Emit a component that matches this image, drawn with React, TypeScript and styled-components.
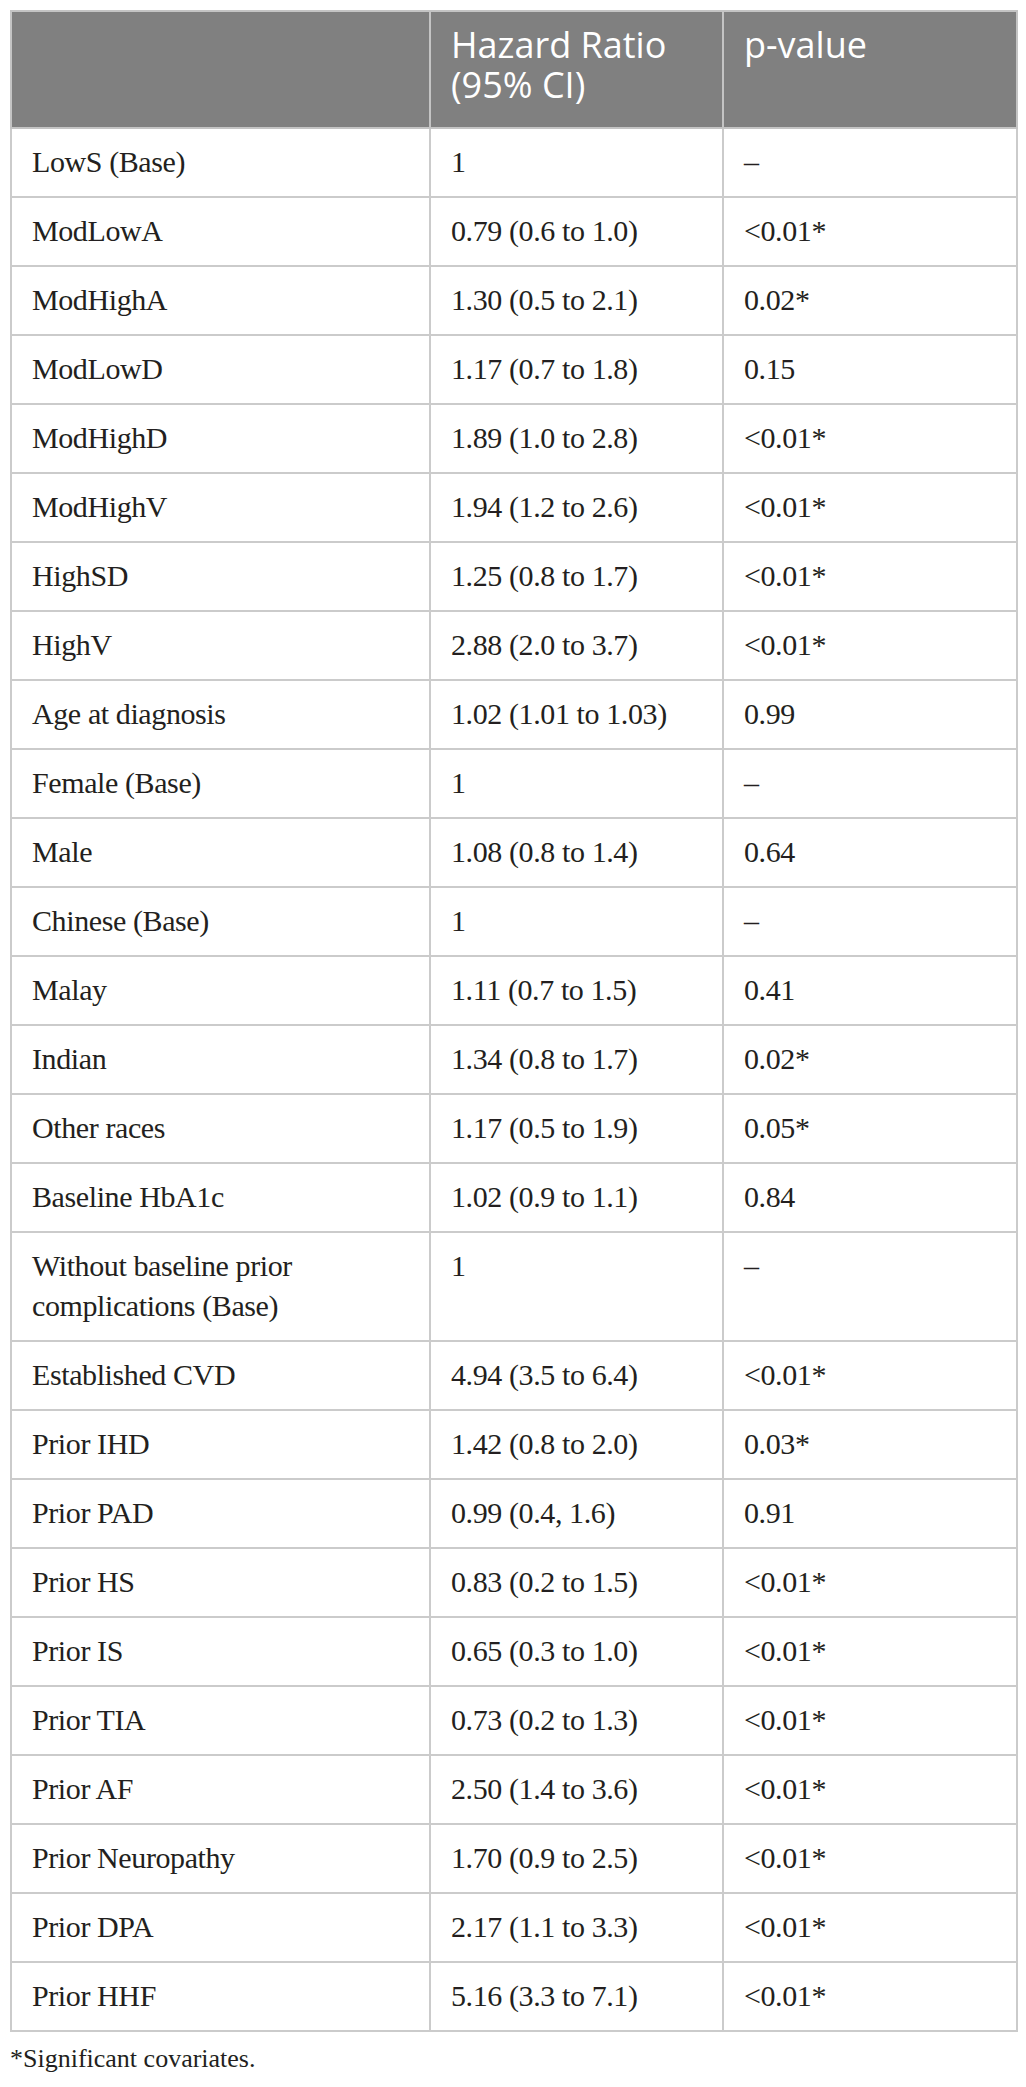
import React from "react";
import styled, { createGlobalStyle } from "styled-components";

const GlobalStyle = createGlobalStyle`
  html, body {
    margin: 0;
    padding: 0;
    background: #ffffff;
  }
`;

const Page = styled.div`
  padding: 10px 10px 0 10px;
  width: 1006px;
  font-family: "Liberation Serif", "Times New Roman", serif;
  color: #231f20;
`;

const Table = styled.table`
  width: 1006px;
  border-collapse: collapse;
  table-layout: fixed;
  border: 2px solid #cbcbcb;
`;

const Col = styled.col<{ $w: number }>`
  width: ${(p) => p.$w}px;
`;

const HeadCell = styled.th`
  background: #808080;
  color: #ffffff;
  font-family: "Open Sans", "Liberation Sans", sans-serif;
  font-weight: 400;
  font-size: 36px;
  line-height: 40px;
  text-align: left;
  vertical-align: top;
  padding: 13px 20px 22px 20px;
  border: 2px solid #c4c4c4;
  height: 80px;
`;

const Cell = styled.td`
  font-size: 30px;
  letter-spacing: -0.4px;
  line-height: 40px;
  text-align: left;
  vertical-align: top;
  padding: 13px 20px 14px 20px;
  border: 2px solid #cbcbcb;
  color: #231f20;
`;

const Footnote = styled.p`
  margin: 11px 0 0 0;
  font-size: 26px;
  line-height: 32px;
  color: #231f20;
`;

type Row = [string, string, string];

const rows: Row[] = [
  ["LowS (Base)", "1", "–"],
  ["ModLowA", "0.79 (0.6 to 1.0)", "<0.01*"],
  ["ModHighA", "1.30 (0.5 to 2.1)", "0.02*"],
  ["ModLowD", "1.17 (0.7 to 1.8)", "0.15"],
  ["ModHighD", "1.89 (1.0 to 2.8)", "<0.01*"],
  ["ModHighV", "1.94 (1.2 to 2.6)", "<0.01*"],
  ["HighSD", "1.25 (0.8 to 1.7)", "<0.01*"],
  ["HighV", "2.88 (2.0 to 3.7)", "<0.01*"],
  ["Age at diagnosis", "1.02 (1.01 to 1.03)", "0.99"],
  ["Female (Base)", "1", "–"],
  ["Male", "1.08 (0.8 to 1.4)", "0.64"],
  ["Chinese (Base)", "1", "–"],
  ["Malay", "1.11 (0.7 to 1.5)", "0.41"],
  ["Indian", "1.34 (0.8 to 1.7)", "0.02*"],
  ["Other races", "1.17 (0.5 to 1.9)", "0.05*"],
  ["Baseline HbA1c", "1.02 (0.9 to 1.1)", "0.84"],
  ["Without baseline prior complications (Base)", "1", "–"],
  ["Established CVD", "4.94 (3.5 to 6.4)", "<0.01*"],
  ["Prior IHD", "1.42 (0.8 to 2.0)", "0.03*"],
  ["Prior PAD", "0.99 (0.4, 1.6)", "0.91"],
  ["Prior HS", "0.83 (0.2 to 1.5)", "<0.01*"],
  ["Prior IS", "0.65 (0.3 to 1.0)", "<0.01*"],
  ["Prior TIA", "0.73 (0.2 to 1.3)", "<0.01*"],
  ["Prior AF", "2.50 (1.4 to 3.6)", "<0.01*"],
  ["Prior Neuropathy", "1.70 (0.9 to 2.5)", "<0.01*"],
  ["Prior DPA", "2.17 (1.1 to 3.3)", "<0.01*"],
  ["Prior HHF", "5.16 (3.3 to 7.1)", "<0.01*"],
];

export default function App() {
  return (
    <Page>
      <GlobalStyle />
      <Table>
        <colgroup>
          <Col $w={419} />
          <Col $w={293} />
          <Col $w={294} />
        </colgroup>
        <thead>
          <tr>
            <HeadCell></HeadCell>
            <HeadCell>Hazard Ratio (95% CI)</HeadCell>
            <HeadCell>p-value</HeadCell>
          </tr>
        </thead>
        <tbody>
          {rows.map((r) => (
            <tr key={r[0]}>
              <Cell>{r[0]}</Cell>
              <Cell>{r[1]}</Cell>
              <Cell>{r[2]}</Cell>
            </tr>
          ))}
        </tbody>
      </Table>
      <Footnote>*Significant covariates.</Footnote>
    </Page>
  );
}
